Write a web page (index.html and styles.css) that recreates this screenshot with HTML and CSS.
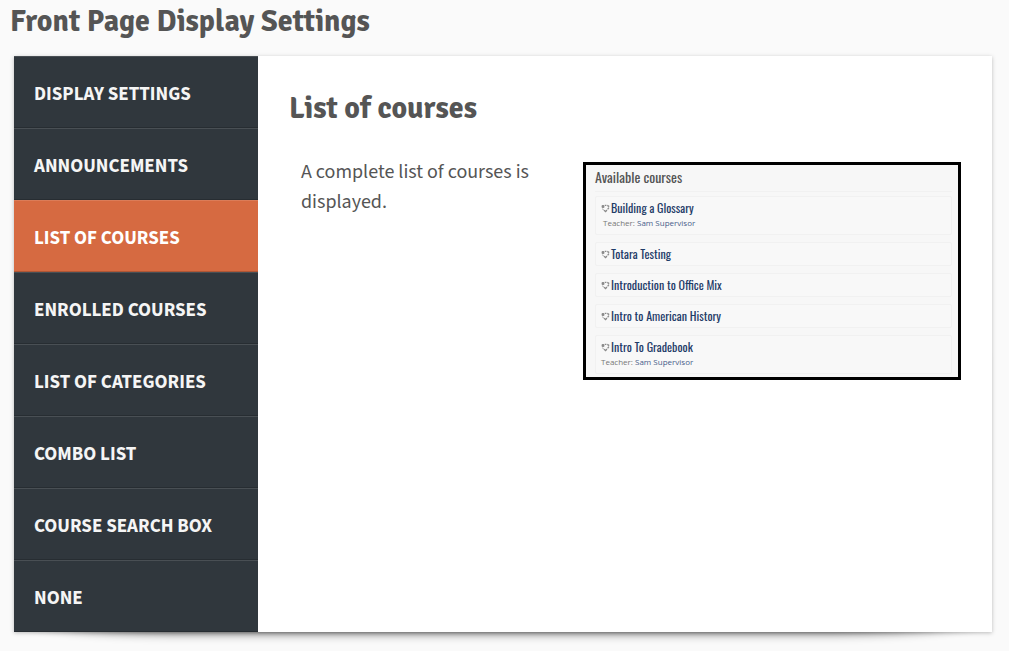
FILE: index.html
```
<!DOCTYPE html>
<html lang="en">
<head>
<meta charset="utf-8">
<title>Front Page Display Settings</title>
<link rel="stylesheet" href="styles.css">
</head>
<body>
<svg class="sprite" aria-hidden="true">
  <symbol id="course" viewBox="0 0 9 9">
    <path d="M1 1.5h2v2H1zM1.6 4.6l.8 1.6" fill="#8a8a8a" stroke="#8a8a8a" stroke-width=".8"/>
    <path d="M3.8 1.3h1.6M6.3 1.4l1.9 1.2M7.9 3.6L6.6 5.3M5.9 6L4.6 7.6 3 6.3" fill="none" stroke="#8a8a8a" stroke-width="1.3"/>
  </symbol>
</svg>
<h1 class="page-title">Front Page Display Settings</h1>
<main class="panel">
  <nav class="tabs" aria-label="Display settings">
    <a class="tab" href="#">Display Settings</a>
    <a class="tab" href="#">Announcements</a>
    <a class="tab tab-active" href="#" aria-current="page">List of Courses</a>
    <a class="tab" href="#">Enrolled Courses</a>
    <a class="tab" href="#">List of Categories</a>
    <a class="tab" href="#">Combo List</a>
    <a class="tab" href="#">Course Search Box</a>
    <a class="tab" href="#">None</a>
  </nav>
  <section class="content">
    <h2 class="content-title">List of courses</h2>
    <div class="columns">
      <p class="description">A complete list of courses is displayed.</p>
      <div class="preview">
        <h3 class="preview-title">Available courses</h3>
        <ul class="courses">
          <li class="course course-tall"><div class="course-name"><svg class="icon"><use href="#course"/></svg><a href="#">Building a Glossary</a></div><div class="teacher teacher-inset">Teacher: <a href="#">Sam Supervisor</a></div></li>
          <li class="course"><div class="course-name"><svg class="icon"><use href="#course"/></svg><a href="#">Totara Testing</a></div></li>
          <li class="course"><div class="course-name"><svg class="icon"><use href="#course"/></svg><a href="#">Introduction to Office Mix</a></div></li>
          <li class="course"><div class="course-name"><svg class="icon"><use href="#course"/></svg><a href="#">Intro to American History</a></div></li>
          <li class="course course-tall"><div class="course-name"><svg class="icon"><use href="#course"/></svg><a href="#">Intro To Gradebook</a></div><div class="teacher">Teacher: <a href="#">Sam Supervisor</a></div></li>
        </ul>
      </div>
    </div>
  </section>
</main>
</body>
</html>
```
FILE: styles.css
```
* { box-sizing: border-box; }
body {
  margin: 0;
  padding: 0 17px 18px 14px;
  background: #fafafa;
  color: #555;
  font-family: "Source Sans 3", "Noto Sans CJK SC", sans-serif;
}
h1, h2, h3, p, ul { margin: 0; padding: 0; }
a { color: inherit; text-decoration: none; }
.sprite { display: none; }
.page-title, .content-title {
  font-family: Signika, "Noto Sans CJK SC", sans-serif;
  font-size: 30px;
  font-weight: 700;
  line-height: 44px;
}
.page-title { margin: 0 0 12px -4px; }
.panel {
  position: relative;
  z-index: 0;
  display: flex;
  background: #fff;
  box-shadow: 0 1px 4px rgba(0, 0, 0, .25);
}
.panel::before {
  content: "";
  position: absolute;
  z-index: -2;
  inset: 50% 12px 1px;
  border-radius: 160px / 14px;
  box-shadow: 0 0 12px rgba(0, 0, 0, .9);
}
.panel::after {
  content: "";
  position: absolute;
  z-index: -1;
  inset: 0;
  background: #fff;
}
.tabs { width: 244px; flex: none; }
.tab {
  display: block;
  padding: 6px 20px 0;
  background: #30373d;
  box-shadow: inset 0 1px rgba(255, 255, 255, .12), inset 0 -1px rgba(0, 0, 0, .18);
  color: #f5f5f5;
  font-size: 19px;
  font-weight: 700;
  line-height: 66px;
  text-transform: uppercase;
}
.tab-active { background: #d66a41; color: #fff; }
.content { flex: 1; padding: 31px; }
.columns {
  display: grid;
  grid-template-columns: 1fr 378px;
  gap: 32px;
}
.description {
  padding: 26px 0 0 12px;
  font-size: 20px;
  font-weight: 400;
  line-height: 30px;
}
.preview {
  margin-top: 31px;
  padding: 0 6px 3px 9px;
  border: 3px solid #000;
  background: #f7f7f7;
}
.preview-title {
  padding-bottom: 3px;
  border-bottom: 1px solid #f1f1f1;
  font-family: Oswald, "Noto Sans CJK SC", sans-serif;
  font-size: 14px;
  font-weight: 400;
  line-height: 23px;
}
.courses {
  display: grid;
  gap: 7px;
  margin-top: 4px;
  list-style: none;
}
.course {
  height: 24px;
  padding: 0 5px;
  border: 1px solid #f1f1f1;
  border-radius: 2px;
  background: #f8f8f8;
}
.course-tall { height: 39px; }
.course-name {
  display: flex;
  align-items: center;
  gap: 1px;
  color: #1f3c68;
  font-family: Oswald, "Noto Sans CJK SC", sans-serif;
  font-size: 12px;
  font-weight: 400;
  line-height: 22px;
}
.icon { width: 9px; height: 9px; }
.teacher { font: 400 8px/8px "Open Sans", sans-serif; color: #777; }
.teacher-inset { padding-left: 2px; }
.teacher a { color: #48608a; }
```
